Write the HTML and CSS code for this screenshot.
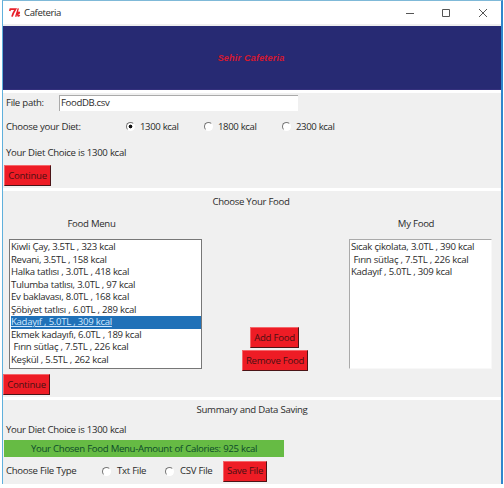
FILE: index.html
```html
<!DOCTYPE html>
<html lang="en">
<head>
<meta charset="utf-8">
<title>Cafeteria</title>
<link rel="stylesheet" href="styles.css">
</head>
<body>
<div class="window">
  <header class="titlebar">
    <svg class="logo" viewBox="0 0 12 10" width="12" height="10"><path d="M.7 3 1.300 1.200h5.200C5 3.500 3.800 5.500 3 8.600" fill="none" stroke="#e8202a" stroke-width="1.700"/><path d="M9.300.4 6.700 8.700M7.500 6c1-1.600 2.700-2.400 2.900-1.400S8.800 5.800 8.200 5.900c.8.2.3 2.300 1.200 2.200.6 0 .9-.6 1.200-1.200" fill="none" stroke="#e8202a" stroke-width="1.400"/></svg>
    <span class="title">Cafeteria</span>
    <svg class="controls" viewBox="0 0 84 10" width="84" height="10" fill="none" stroke="#555"><path d="M1 5.500h8"/><path d="M37.500 1.500h7v7h-7z"/><path d="m74 1 8 8m0-8-8 8"/></svg>
  </header>
  <div class="banner"><span>Sehir Cafeteria</span></div>

  <section class="panel diet">
    <div class="row path"><label class="w-path">File path:</label><div class="entry">FoodDB.csv</div></div>
    <div class="row choices">
      <span class="lead">Choose your Diet:</span>
      <i class="radio on"></i><span class="opt">1300 kcal</span>
      <i class="radio"></i><span class="opt">1800 kcal</span>
      <i class="radio"></i><span class="opt">2300 kcal</span>
    </div>
    <div class="row status">Your Diet Choice is 1300 kcal</div>
    <button class="btn cont">Continue</button>
  </section>

  <section class="panel food">
    <h2>Choose Your Food</h2>
    <div class="columns">
      <div class="col menu">
        <h3>Food Menu</h3>
        <ul class="list">
          <li>Kiwli Çay, 3.5TL , 323 kcal</li>
          <li>Revani, 3.5TL , 158 kcal</li>
          <li>Halka tatlısı , 3.0TL , 418 kcal</li>
          <li>Tulumba tatlısı, 3.0TL , 97 kcal</li>
          <li>Ev baklavası, 8.0TL , 168 kcal</li>
          <li>Şöbiyet tatlısı , 6.0TL , 289 kcal</li>
          <li class="selected">Kadayıf , 5.0TL , 309 kcal</li>
          <li>Ekmek kadayıfı, 6.0TL , 189 kcal</li>
          <li>&nbsp;Fırın sütlaç , 7.5TL , 226 kcal</li>
          <li>Keşkül , 5.5TL , 262 kcal</li>
        </ul>
      </div>
      <div class="actions">
        <button class="btn add">Add Food</button>
        <button class="btn remove">Remove Food</button>
      </div>
      <div class="col mine">
        <h3>My Food</h3>
        <ul class="list">
          <li>Sıcak çikolata, 3.0TL , 390 kcal</li>
          <li>&nbsp;Fırın sütlaç , 7.5TL , 226 kcal</li>
          <li>Kadayıf , 5.0TL , 309 kcal</li>
        </ul>
      </div>
    </div>
    <button class="btn cont second">Continue</button>
  </section>

  <section class="panel summary">
    <h2>Summary and Data Saving</h2>
    <div class="row status">Your Diet Choice is 1300 kcal</div>
    <div class="total">Your Chosen Food Menu-Amount of Calories: 925 kcal</div>
    <div class="row save">
      <span class="type">Choose File Type</span>
      <i class="radio"></i><span class="txt">Txt File</span>
      <i class="radio"></i><span class="csv">CSV File</span>
      <button class="btn savebtn">Save File</button>
    </div>
  </section>
</div>
</body>
</html>
```
FILE: styles.css
```css
* { box-sizing: border-box; }
body {
  margin: 0;
  width: 504px;
  height: 488px;
  overflow: hidden;
  background: #fff;
  color: #2b2b2b;
  font: 9.6px/12px "Open Sans", "Noto Sans", sans-serif;
  letter-spacing: -.31px;
  word-spacing: .2px;
  white-space: nowrap;
}
h2, h3 { margin: 0; font: inherit; text-align: center; }
.window {
  width: 501px;
  height: 484px;
  overflow: hidden;
  margin-left: 2px;
  border: 1px solid #5fb0dc;
  border-top-color: #7fb9d8;
  border-right: 2px solid #2f86cc;
  border-bottom: 0;
}
.titlebar { display: flex; align-items: center; height: 25px; padding: 0 12px 0 6px; border-bottom: 2px solid #eee; }
.title { margin-left: 3px; letter-spacing: -.4px; }
.controls { margin-left: auto; }
.banner {
  display: flex;
  align-items: center;
  justify-content: center;
  height: 64px;
  padding-right: 2px;
  background: #272a73;
  border-bottom: 1px solid #34307d;
  color: #d6182f;
  font: italic bold 9px/12px "Liberation Sans", sans-serif;
  letter-spacing: .2px;
}
.panel { background: #f0f0f0; }
.row { display: flex; align-items: center; }
.diet { margin-top: 3px; height: 95px; }
.path { height: 19px; padding: 1px 0 1px 3px; }
.w-path { width: 53px; }
.entry { width: 239px; height: 16px; background: #fff; border-top: 1px solid #aaa; border-left: 1px solid #aaa; padding-left: 1px; line-height: 14px; letter-spacing: -.36px; }
.choices { height: 29px; padding-left: 3px; }
.lead { width: 120px; }
.radio { width: 9px; height: 9px; border: 1px solid; border-color: #777 #fff #fff #777; border-radius: 50%; background: #fff; flex: none; }
.radio.on { background: radial-gradient(circle, #111 1.6px, #fff 2.2px); }
.opt { width: 65px; margin-left: 5px; margin-right: -1px; letter-spacing: -.4px; }
.status { height: 24px; padding-left: 3px; }
.btn {
  display: block;
  height: 21px;
  margin: 0;
  padding: 0;
  border: 1px solid;
  border-color: #f4666a #4a1417 #4a1417 #f4666a;
  border-radius: 0;
  background: #ee1c25;
  color: #4b1013;
  font: inherit;
  letter-spacing: -.25px;
}
.cont { width: 47px; margin: 0 0 0 1px; }
.food { margin-top: 3px; height: 206px; }
.food h2 { height: 20px; line-height: 21px; padding-right: 2px; }
.columns { display: flex; height: 158px; }
.col h3 { height: 28px; line-height: 25px; }
.list { list-style: none; margin: 0; padding: 1px 0 0 1px; height: 130px; border: 1px solid #777; background: #fff; }
.list li { height: 12.5px; line-height: 12.5px; }
.menu { width: 193px; margin-left: 6px; }
.menu h3 { padding-right: 28px; }
.list .selected { background: #2071b8; color: #cfe8ff; text-decoration: underline; }
.actions { width: 147px; padding: 116px 0 0 40px; }
.add { width: 49px; margin-left: 8px; margin-bottom: 2px; }
.remove { width: 66px; }
.mine { width: 143px; }
.mine h3 { padding-right: 9px; }
.mine .list { border-color: #aaa #f8f8f8 #f8f8f8 #aaa; }
.second { margin: 5px 0 0; }
.summary { margin-top: 3px; height: 85px; }
.summary h2 { height: 19px; line-height: 19px; }
.summary .status { height: 21px; }
.total { width: 280px; height: 17px; margin-left: 1px; padding-left: 27px; background: #66bb44; color: #0d4a2a; line-height: 17px; letter-spacing: -.31px; }
.save { height: 28px; padding-left: 3px; }
.type { width: 96px; }
.txt { width: 48px; margin-left: 6px; }
.csv { width: 43px; margin-left: 6px; }
.savebtn { width: 44px; }
```
